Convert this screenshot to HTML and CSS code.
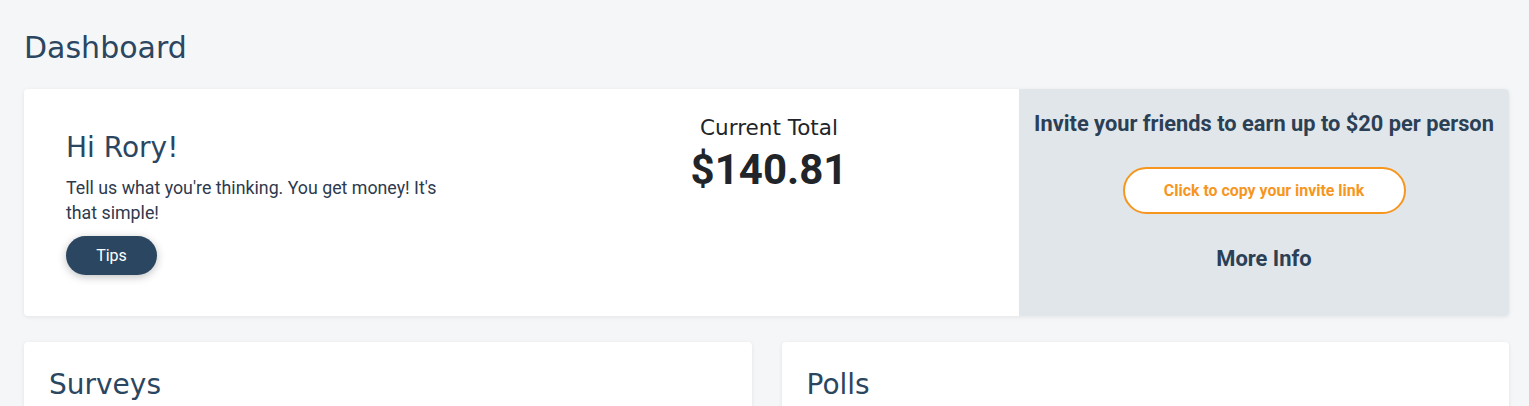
FILE: index.html
```html
<!DOCTYPE html>
<html lang="en">
<head>
<meta charset="utf-8">
<title>Dashboard</title>
<link rel="stylesheet" href="styles.css">
</head>
<body>
<main class="page">
  <h1 class="page-title">Dashboard</h1>
  <section class="summary-card">
    <div class="welcome">
      <h2 class="welcome-title">Hi Rory!</h2>
      <p class="welcome-text">Tell us what you're thinking. You get money! It's that simple!</p>
      <button class="tips-btn">Tips</button>
    </div>
    <div class="total">
      <div class="total-label">Current Total</div>
      <div class="total-value">$140.81</div>
    </div>
    <div class="invite">
      <div class="invite-title">Invite your friends to earn up to $20 per person</div>
      <button class="invite-btn">Click to copy your invite link</button>
      <div class="invite-more">More Info</div>
    </div>
  </section>
  <div class="panels">
    <section class="panel"><h2 class="panel-title">Surveys</h2></section>
    <section class="panel"><h2 class="panel-title">Polls</h2></section>
  </div>
</main>
</body>
</html>
```
FILE: styles.css
```css
* { box-sizing: border-box; }
html, body { margin: 0; padding: 0; }
body {
  background: #f5f6f8;
  font-family: Roboto, "Liberation Sans", sans-serif;
  color: #2b4660;
  overflow: hidden;
}
.page {
  padding: 28px 20px 0 24px;
}
.page-title {
  margin: 0;
  font-family: "DejaVu Sans", sans-serif;
  font-weight: 400;
  font-size: 30px;
  line-height: 40px;
  color: #2b4660;
  height: 61px;
}
.summary-card {
  display: grid;
  grid-template-columns: 495px 500px 1fr;
  background: #fff;
  border-radius: 4px;
  box-shadow: 0 1px 4px rgba(0,0,0,0.08);
  height: 227px;
  overflow: hidden;
}
.welcome {
  padding: 41px 0 0 42px;
}
.welcome-title {
  margin: 0;
  font-family: "DejaVu Sans", sans-serif;
  font-weight: 400;
  font-size: 28px;
  line-height: 36px;
  color: #2b4660;
}
.welcome-text {
  margin: 9px 0 0;
  max-width: 400px;
  font-size: 17.8px;
  line-height: 25px;
  color: #2e3a4d;
}
.tips-btn {
  margin-top: 11px;
  width: 91px;
  height: 39px;
  border: none;
  border-radius: 20px;
  background: #2b4660;
  color: #fff;
  font-family: Roboto, sans-serif;
  font-size: 16px;
  box-shadow: 0 2px 8px rgba(0,0,0,0.25);
}
.total {
  display: flex;
  flex-direction: column;
  align-items: center;
  padding-top: 25px;
  color: #212529;
}
.total-label {
  font-family: "DejaVu Sans", sans-serif;
  font-size: 21.5px;
  line-height: 28px;
}
.total-value {
  margin-top: 2px;
  font-weight: 700;
  font-size: 42px;
  line-height: 52px;
}
.invite {
  background: #e1e6ea;
  display: flex;
  flex-direction: column;
  align-items: center;
  padding-top: 20px;
  color: #2b3f55;
}
.invite-title {
  font-weight: 700;
  font-size: 21.8px;
  line-height: 30px;
  white-space: nowrap;
}
.invite-btn {
  margin-top: 28px;
  width: 283px;
  height: 47px;
  border: 2px solid #f7961f;
  border-radius: 24px;
  background: #fff;
  color: #f7961f;
  font-family: Roboto, sans-serif;
  font-weight: 700;
  font-size: 15.9px;
}
.invite-more {
  margin-top: 30px;
  font-weight: 700;
  font-size: 21.9px;
  line-height: 30px;
}
.panels {
  margin-top: 26px;
  display: grid;
  grid-template-columns: 1fr 1fr;
  gap: 30px;
}
.panel {
  background: #fff;
  border-radius: 4px;
  box-shadow: 0 1px 4px rgba(0,0,0,0.08);
  height: 100px;
  padding: 25px 25px;
}
.panel-title {
  margin: 0;
  font-family: "DejaVu Sans", sans-serif;
  font-weight: 400;
  font-size: 28px;
  line-height: 36px;
  color: #2b4660;
}
```
